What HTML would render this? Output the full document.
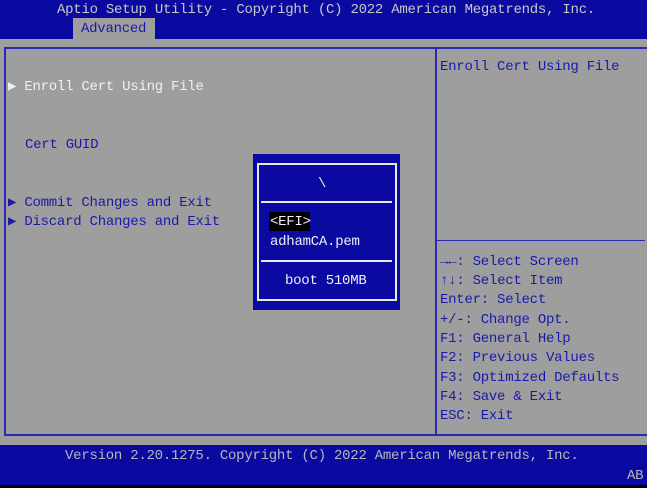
<!DOCTYPE html>
<html><head><meta charset="utf-8"><style>
*{margin:0;padding:0;box-sizing:border-box}
body{width:647px;height:488px;background:#000;position:relative;overflow:hidden;font-family:"Liberation Mono","DejaVu Sans Mono",monospace;font-size:14px;}
.t{position:absolute;line-height:16px;white-space:pre;letter-spacing:-0.25px}
.b{color:#1a1aa8}
.w{color:#f0f0f0}
.g{color:#b8b8b8}
</style></head><body>
<div style="position:absolute;left:0;top:0;width:647px;height:39px;background:#0a0aa0"></div>
<div style="position:absolute;left:0;top:39px;width:647px;height:406px;background:#9e9e9e"></div>
<div style="position:absolute;left:0;top:445px;width:647px;height:40px;background:#0a0aa0"></div>
<div class="t g" style="left:57px;top:2px;color:#c8c8c8">Aptio Setup Utility - Copyright (C) 2022 American Megatrends, Inc.</div>
<div style="position:absolute;left:73px;top:18px;width:82px;height:21px;background:#9e9e9e"></div>
<div class="t b" style="left:81px;top:21px">Advanced</div>
<div style="position:absolute;left:4px;top:47px;width:643px;height:389px;border:2px solid #2a2ab0;border-right:none"></div>
<div style="position:absolute;left:435px;top:47px;width:2px;height:389px;background:#2a2ab0"></div>
<div style="position:absolute;left:437px;top:240px;width:208px;height:1px;background:#2a2ab0"></div>
<div class="t w" style="left:8px;top:79px">▶ Enroll Cert Using File</div>
<div class="t b" style="left:25px;top:137px">Cert GUID</div>
<div class="t b" style="left:8px;top:195px">▶ Commit Changes and Exit</div>
<div class="t b" style="left:8px;top:214px">▶ Discard Changes and Exit</div>
<div class="t b" style="left:440px;top:59px">Enroll Cert Using File</div>
<div class="t b" style="left:440px;top:254px"><b>→←</b>: Select Screen</div>
<div class="t b" style="left:440px;top:273px"><b>↑↓</b>: Select Item</div>
<div class="t b" style="left:440px;top:292px">Enter: Select</div>
<div class="t b" style="left:440px;top:312px">+/-: Change Opt.</div>
<div class="t b" style="left:440px;top:331px">F1: General Help</div>
<div class="t b" style="left:440px;top:350px">F2: Previous Values</div>
<div class="t b" style="left:440px;top:370px">F3: Optimized Defaults</div>
<div class="t b" style="left:440px;top:389px">F4: Save &amp; Exit</div>
<div class="t b" style="left:440px;top:408px">ESC: Exit</div>
<div style="position:absolute;left:253px;top:154px;width:147px;height:156px;background:#0a0aa0"></div>
<div style="position:absolute;left:257px;top:163px;width:140px;height:138px;border:2px solid #e8e8e8"></div>
<div style="position:absolute;left:261px;top:201px;width:131px;height:2px;background:#e8e8e8"></div>
<div style="position:absolute;left:261px;top:260px;width:131px;height:2px;background:#e8e8e8"></div>
<div class="t w" style="left:318px;top:176px">\</div>
<div style="position:absolute;left:269px;top:212px;width:41px;height:19px;background:#000"></div>
<div class="t w" style="left:270px;top:214px">&lt;EFI&gt;</div>
<div class="t w" style="left:270px;top:234px">adhamCA.pem</div>
<div class="t w" style="left:285px;top:273px">boot 510MB</div>
<div class="t g" style="left:65px;top:448px">Version 2.20.1275. Copyright (C) 2022 American Megatrends, Inc.</div>
<div class="t g" style="left:627px;top:468px">AB</div>
</body></html>
